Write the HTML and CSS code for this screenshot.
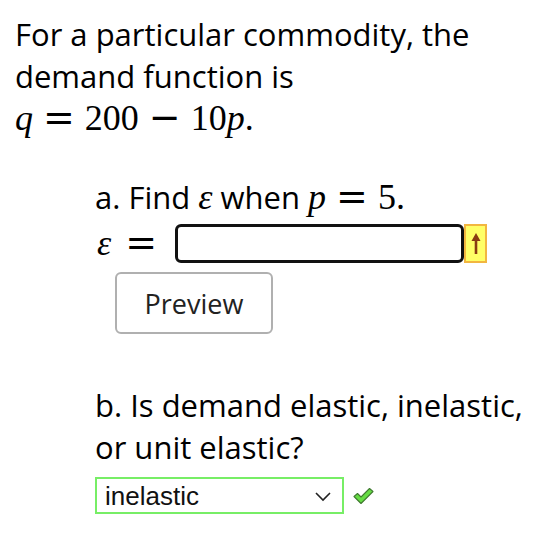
FILE: index.html
```html
<!DOCTYPE html>
<html>
<head>
<meta charset="utf-8">
<link rel="stylesheet" href="styles.css">
</head>
<body>
<div class="page">
  <p class="intro">For a particular commodity, the demand function is <span class="math"><i>q</i><span class="op">=</span>200<span class="op">&minus;</span>10<i>p</i>.</span></p>

  <div class="part part-a">
    <p class="question">a. Find <span class="math"><i>ε</i></span> when <span class="math"><i>p</i><span class="op">=</span>5.</span></p>
    <div class="answer-row">
      <span class="math eps"><i>ε</i><span class="op">=</span></span>
      <span class="input-box"></span>
      <span class="flag"><svg width="12" height="26" viewBox="0 0 12 26"><path d="M6 6 L6 24" stroke="#8a3b12" stroke-width="2.6" fill="none"/><path d="M1.5 11 L6 3 L10.5 11 Z" fill="#8a3b12"/></svg></span>
    </div>
    <button class="preview">Preview</button>
  </div>

  <div class="part part-b">
    <p class="question">b. Is demand elastic, inelastic, or unit elastic?</p>
    <div class="select-row">
      <div class="select"><span>inelastic</span><svg class="chev" width="18" height="12" viewBox="0 0 18 12"><path d="M2 2 L9 9 L16 2" stroke="#222" stroke-width="1.6" fill="none"/></svg></div>
      <svg class="check" width="21" height="18" viewBox="0 0 21 18"><path d="M1 9.5 L4.5 6.5 L8 10 L16.5 1.5 L20 4.5 L8 16.5 Z" fill="#66dd44" stroke="#3f7a30" stroke-width="1.1" stroke-linejoin="round"/></svg>
    </div>
  </div>
</div>
</body>
</html>
```

FILE: styles.css
```css
html, body {
  margin: 0;
  padding: 0;
  background: #fff;
}
.page {
  padding: 13px 0 0 15px;
  width: 530px;
  font-family: "Open Sans", "Noto Sans", sans-serif;
  font-size: 31px;
  line-height: 42px;
  color: #000;
}
p {
  margin: 0;
}
.intro {
  width: 490px;
}
.math {
  font-family: "Liberation Serif", "DejaVu Serif", serif;
  font-size: 36px;
  white-space: nowrap;
  line-height: 1;
}
.math i {
  font-style: italic;
}
.op {
  font-family: "DejaVu Sans", sans-serif;
  font-size: 38px;
  line-height: 0;
  margin: 0 10px;
}
.part {
  padding-left: 80px;
}
.part-a {
  margin-top: 37px;
}
.answer-row {
  display: flex;
  align-items: center;
  height: 40px;
  margin-top: 5px;
}
.eps {
  width: 78px;
  padding-left: 2px;
}
.eps .op {
  margin-left: 14px;
}
.input-box {
  box-sizing: border-box;
  width: 289px;
  height: 39px;
  border: 3px solid #111;
  border-radius: 6px;
  background: #fff;
}
.flag {
  box-sizing: border-box;
  width: 23px;
  height: 39px;
  background: #ffff66;
  border: 2px solid #f2b640;
  display: flex;
  align-items: center;
  justify-content: center;
}
.preview {
  display: block;
  margin: 9px 0 0 20px;
  box-sizing: border-box;
  width: 158px;
  height: 62px;
  border: 2px solid #b0b0b0;
  border-radius: 6px;
  background: #fff;
  font-family: "Open Sans", "Noto Sans", sans-serif;
  font-size: 27px;
  color: #222;
  padding: 0;
}
.part-b {
  margin-top: 50px;
  width: 450px;
}
.select-row {
  display: flex;
  align-items: center;
  margin-top: 9px;
  gap: 9px;
}
.select {
  box-sizing: border-box;
  width: 249px;
  height: 37px;
  border: 2px solid #77ee66;
  display: flex;
  align-items: center;
  justify-content: space-between;
  padding: 0 10px 0 8px;
  font-family: "Liberation Sans", Arial, sans-serif;
  font-size: 26px;
  color: #111;
}
.chev {
  margin-top: 2px;
}
```
